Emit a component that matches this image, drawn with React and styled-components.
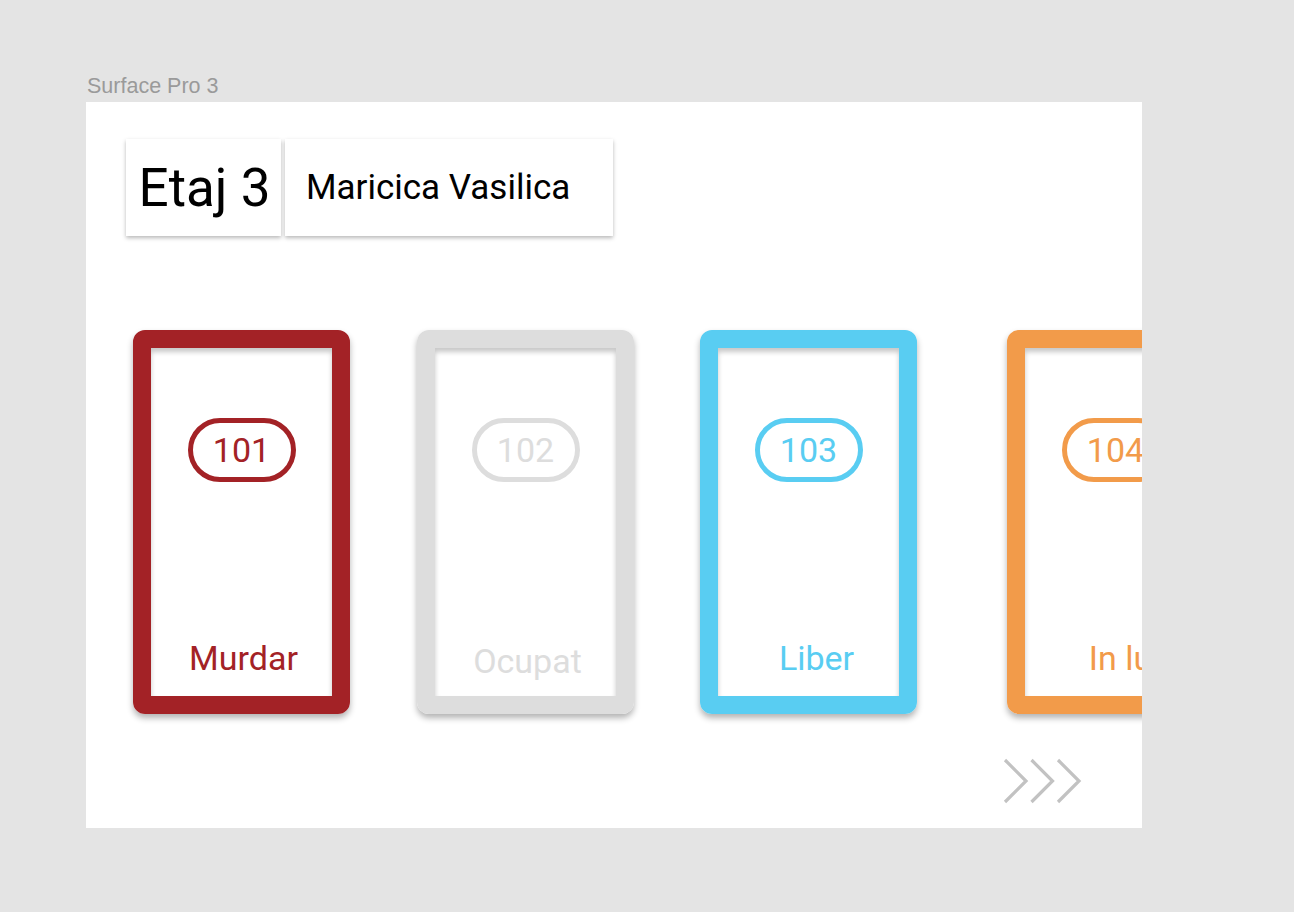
import React from "react";
import styled, { createGlobalStyle } from "styled-components";

const GlobalStyle = createGlobalStyle`
  body {
    margin: 0;
    background: #e4e4e4;
    font-family: Roboto, "Noto Sans", sans-serif;
  }
`;

const Page = styled.div`
  width: 1294px;
  height: 912px;
  padding: 73px 0 0 86px;
  box-sizing: border-box;
`;

const DeviceName = styled.div`
  font-family: "Liberation Sans", Arial, sans-serif;
  font-size: 21.5px;
  line-height: 26px;
  color: #9a9a9a;
  margin: 0 0 3px 1px;
`;

const Artboard = styled.div`
  width: 1056px;
  height: 726px;
  background: #fff;
  overflow: hidden;
  padding: 37px 0 0 40px;
  box-sizing: border-box;
  display: flex;
  flex-direction: column;
`;

const Header = styled.div`
  display: flex;
  gap: 4px;
`;

const HeaderCell = styled.div`
  height: 97px;
  width: ${({ $width }) => $width}px;
  box-sizing: border-box;
  background: #fff;
  box-shadow: 0 2px 4px rgba(0, 0, 0, 0.28);
  display: flex;
  align-items: center;
  justify-content: ${({ $center }) => ($center ? "center" : "flex-start")};
  padding-left: ${({ $center }) => ($center ? 2 : 21)}px;
  font-size: ${({ $size }) => $size}px;
  color: #000;
`;

const Rooms = styled.div`
  display: flex;
  margin: 94px 0 0 7px;
`;

const Room = styled.div`
  flex-shrink: 0;
  width: 217px;
  height: 384px;
  box-sizing: border-box;
  margin-left: ${({ $offset }) => $offset}px;
  border: 18px solid ${({ $color }) => $color};
  border-radius: 12px;
  box-shadow: 0 4px 6px rgba(0, 0, 0, 0.3), inset 0 4px 5px rgba(0, 0, 0, 0.22);
  display: flex;
  flex-direction: column;
  align-items: center;
  color: ${({ $color }) => $color};
`;

const Number = styled.div`
  margin-top: 70px;
  width: 108px;
  height: 64px;
  box-sizing: border-box;
  border: 5px solid currentColor;
  border-radius: 32px;
  display: flex;
  align-items: center;
  justify-content: center;
  font-size: 34px;
  font-weight: 400;
`;

const Status = styled.div`
  margin-top: auto;
  margin-bottom: 18px;
  font-size: 34px;
  line-height: 40px;
  white-space: nowrap;
  transform: translate(${({ $dx }) => $dx}px, ${({ $dy }) => $dy}px);
`;

const Pager = styled.div`
  display: flex;
  justify-content: flex-end;
  padding-right: 58px;
  margin-top: 44px;
`;

const rooms = [
  { nr: 101, status: "Murdar", color: "#a32226", offset: 0, dx: 2, dy: 0 },
  { nr: 102, status: "Ocupat", color: "#dddddd", offset: 67, dx: 2, dy: 3 },
  { nr: 103, status: "Liber", color: "#59cdf2", offset: 66, dx: 8, dy: 0 },
  { nr: 104, status: "In lucru", color: "#f29b4a", offset: 90, dx: 29, dy: 0 },
];

const Chevrons = () => (
  <svg width="82" height="46" viewBox="0 0 82 46" fill="none" stroke="#c2c2c2" strokeWidth="3.2">
    <path d="M3 2 L24 23 L3 44" />
    <path d="M29.5 2 L50.5 23 L29.5 44" />
    <path d="M56 2 L77 23 L56 44" />
  </svg>
);

const App = () => (
  <Page>
    <GlobalStyle />
    <DeviceName>Surface Pro 3</DeviceName>
    <Artboard>
      <Header>
        <HeaderCell $width={155} $size={53} $center>
          Etaj 3
        </HeaderCell>
        <HeaderCell $width={328} $size={35}>
          Maricica Vasilica
        </HeaderCell>
      </Header>
      <Rooms>
        {rooms.map((r) => (
          <Room key={r.nr} $color={r.color} $offset={r.offset}>
            <Number>{r.nr}</Number>
            <Status $dx={r.dx} $dy={r.dy}>
              {r.status}
            </Status>
          </Room>
        ))}
      </Rooms>
      <Pager>
        <Chevrons />
      </Pager>
    </Artboard>
  </Page>
);

export default App;
